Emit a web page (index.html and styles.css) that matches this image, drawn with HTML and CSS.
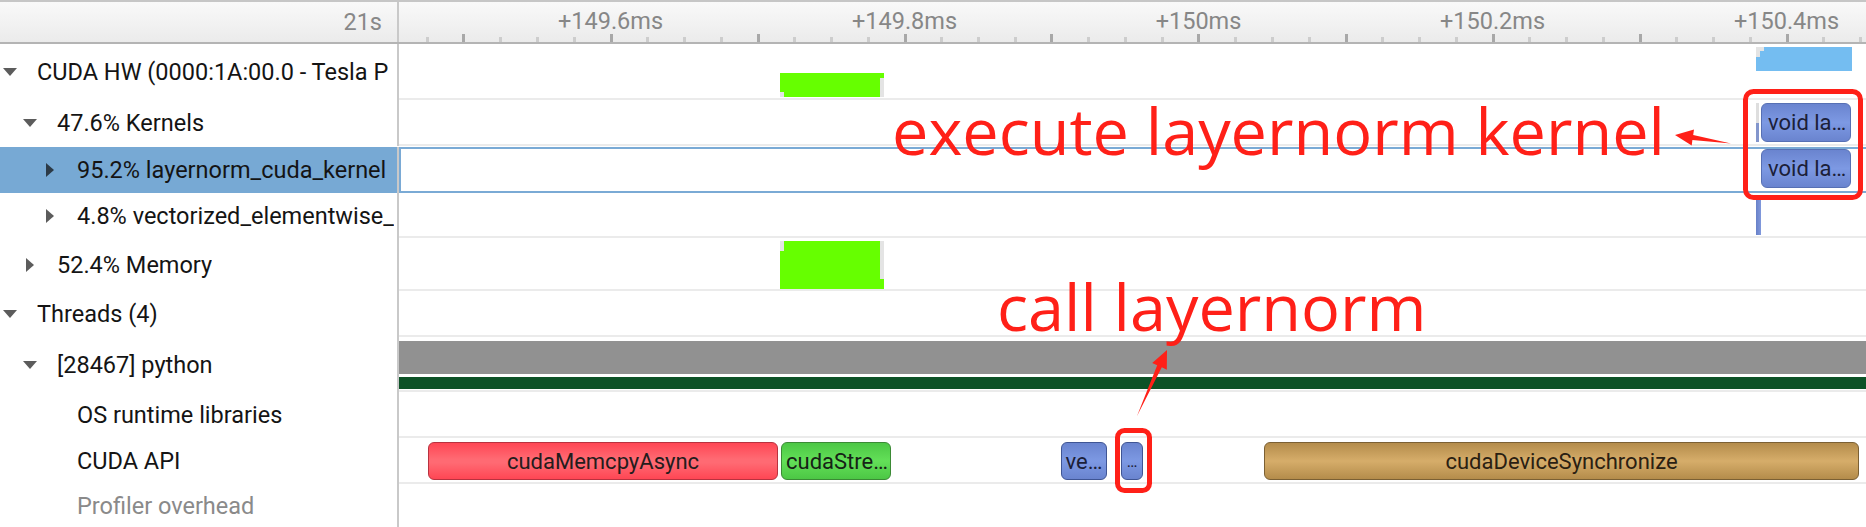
FILE: index.html
```html
<!DOCTYPE html>
<html>
<head>
<meta charset="utf-8">
<link rel="stylesheet" href="styles.css">
</head>
<body>
<div class="view">
  <div class="row hdr">
    <div class="label">21s</div>
    <div class="track ruler">
      <span class="tick-label" style="left:211.5px">+149.6ms</span>
      <span class="tick-label" style="left:505.5px">+149.8ms</span>
      <span class="tick-label" style="left:799.5px">+150ms</span>
      <span class="tick-label" style="left:1093.5px">+150.2ms</span>
      <span class="tick-label" style="left:1387.5px">+150.4ms</span>
    </div>
  </div>

  <div class="row h56">
    <div class="label lv0"><span class="slot"><span class="down"></span></span><span class="txt">CUDA HW (0000:1A:00.0 - Tesla P</span></div>
    <div class="track">
      <div class="blk lime" style="left:381px;top:29px;width:104px;height:24px"></div>
      <div class="blk notch" style="left:381px;top:48px;width:4px;height:5px"></div>
      <div class="blk notch" style="left:481px;top:34px;width:4px;height:19px"></div>
      <div class="blk sky" style="left:1357px;top:3px;width:96px;height:24px"></div>
      <div class="blk notch" style="left:1357px;top:3px;width:8px;height:4px"></div>
      <div class="blk notch" style="left:1357px;top:7px;width:4px;height:6px"></div>
    </div>
  </div>

  <div class="row h46">
    <div class="label lv1"><span class="slot"><span class="down"></span></span><span class="txt">47.6% Kernels</span></div>
    <div class="track">
      <div class="blk thin-split" style="left:1357px;top:3px;width:3px;height:39px"></div>
      <div class="ev blue left" style="left:1362px;top:3px;width:90px;height:39px">void la…</div>
    </div>
  </div>

  <div class="row h46 selected">
    <div class="label lv2"><span class="slot"><span class="right"></span></span><span class="txt">95.2% layernorm_cuda_kernel</span></div>
    <div class="track">
      <div class="ev blue left" style="left:1360px;top:0px;width:90px;height:39px">void la…</div>
    </div>
  </div>

  <div class="row h45">
    <div class="label lv2"><span class="slot"><span class="right"></span></span><span class="txt">4.8% vectorized_elementwise_</span></div>
    <div class="track">
      <div class="blk thin-blue" style="left:1357px;top:7px;width:5px;height:35px"></div>
    </div>
  </div>

  <div class="row h53">
    <div class="label lv1"><span class="slot"><span class="right"></span></span><span class="txt">52.4% Memory</span></div>
    <div class="track">
      <div class="blk lime" style="left:381px;top:3px;width:104px;height:48px"></div>
      <div class="blk notch" style="left:381px;top:3px;width:4px;height:10px"></div>
      <div class="blk notch" style="left:481px;top:3px;width:4px;height:38px"></div>
    </div>
  </div>

  <div class="row h46">
    <div class="label lv0"><span class="slot"><span class="down"></span></span><span class="txt">Threads (4)</span></div>
    <div class="track"></div>
  </div>

  <div class="row h55">
    <div class="label lv1"><span class="slot"><span class="down"></span></span><span class="txt">[28467] python</span></div>
    <div class="track">
      <div class="thread-gray"></div>
      <div class="thread-green"></div>
    </div>
  </div>

  <div class="row h46">
    <div class="label lv2"><span class="slot"></span><span class="txt">OS runtime libraries</span></div>
    <div class="track"></div>
  </div>

  <div class="row h46">
    <div class="label lv2"><span class="slot"></span><span class="txt">CUDA API</span></div>
    <div class="track">
      <div class="ev red" style="left:29px;top:4px;width:350px;height:38px">cudaMemcpyAsync</div>
      <div class="ev green left" style="left:382px;top:4px;width:110px;height:38px">cudaStre…</div>
      <div class="ev blue dark" style="left:662px;top:4px;width:46px;height:38px">ve…</div>
      <div class="ev blue dark small" style="left:722px;top:4px;width:22px;height:38px">…</div>
      <div class="ev tan" style="left:865px;top:4px;width:595px;height:38px">cudaDeviceSynchronize</div>
    </div>
  </div>

  <div class="row last">
    <div class="label lv2"><span class="slot"></span><span class="txt muted">Profiler overhead</span></div>
    <div class="track"></div>
  </div>
</div>

<div class="anno anno-exec">execute layernorm kernel</div>
<div class="anno anno-call">call layernorm</div>
<svg class="anno-shapes" width="1866" height="527" viewBox="0 0 1866 527">
  <rect x="1745.5" y="91.5" width="115" height="106" rx="8" ry="8" fill="none" stroke="#ff2018" stroke-width="5"/>
  <rect x="1117.5" y="430.5" width="32" height="60" rx="7" ry="7" fill="none" stroke="#ff2018" stroke-width="5"/>
  <polygon fill="#ff2018" points="1675,135 1694,129.6 1693.2,135 1731,143.5 1692.4,140 1691.7,145.4"/>
  <polygon fill="#ff2018" points="1167,350 1166.8,369.7 1161.8,367.3 1137,416 1157.2,365.3 1152.2,362.9"/>
</svg>
</body>
</html>
```

FILE: styles.css
```css
* { box-sizing: border-box; }

html, body {
  margin: 0;
  padding: 0;
}

body {
  width: 1866px;
  height: 527px;
  overflow: hidden;
  position: relative;
  background: #ffffff;
  font-family: Roboto, "Liberation Sans", sans-serif;
}

.view {
  display: flex;
  flex-direction: column;
  width: 1866px;
}

.row {
  display: flex;
  flex: none;
}

.h56 { height: 56px; }
.h46 { height: 46px; }
.h45 { height: 45px; }
.h53 { height: 53px; }
.h55 { height: 55px; }
.last { height: 43px; }

.label {
  width: 399px;
  flex: none;
  border-right: 2px solid #c9c9c9;
  display: flex;
  align-items: center;
  overflow: hidden;
  white-space: nowrap;
  font-size: 23.5px;
  color: #141414;
}

.lv0 { padding-left: 0; }
.lv1 { padding-left: 20px; }
.lv2 { padding-left: 40px; }

.slot {
  width: 37px;
  flex: none;
  display: flex;
  align-items: center;
}

.down {
  width: 0;
  height: 0;
  margin-left: 3px;
  border-left: 7px solid transparent;
  border-right: 7px solid transparent;
  border-top: 8px solid #5c5c5c;
}

.right {
  width: 0;
  height: 0;
  margin-left: 6px;
  border-top: 7px solid transparent;
  border-bottom: 7px solid transparent;
  border-left: 8px solid #5c5c5c;
}

.txt { overflow: hidden; }
.muted { color: #8a8a8a; }

.track {
  flex: 1;
  position: relative;
  border-bottom: 2px solid #ebebeb;
}

.last .track { border-bottom: 0; }

/* header / ruler */
.hdr {
  height: 44px;
  border-top: 2px solid #c6c6c6;
  border-bottom: 2px solid #b4b4b4;
  background: linear-gradient(#f9f9f9, #ebebeb);
}

.hdr .label {
  justify-content: flex-end;
  padding-right: 15px;
  color: #888888;
}

.ruler {
  border-bottom: 0;
  background-image:
    repeating-linear-gradient(to right, transparent 0 63.5px, #a8a8a8 63.5px 66.5px, transparent 66.5px 147px),
    repeating-linear-gradient(to right, transparent 0 26.75px, #cdcdcd 26.75px 29.75px, transparent 29.75px 36.75px);
  background-size: 100% 8px, 100% 5px;
  background-position: 0 100%, 0 100%;
  background-repeat: no-repeat;
}

.tick-label {
  position: absolute;
  top: 5px;
  transform: translateX(-50%);
  font-size: 23.5px;
  color: #878787;
  line-height: 28px;
  white-space: nowrap;
}

/* selected row */
.selected { margin-top: 1px; }
.selected .label { background: #77a9d4; }
.selected .right { border-left-color: #2c3a47; }
.selected .track {
  border: 2px solid #7aaad5;
  border-right: 0;
}

/* timeline blocks */
.blk { position: absolute; }
.lime { background: #66ff00; }
.sky { background: #74bdf1; }
.notch { background: #e4e4e4; }
.thin-split { background: linear-gradient(#dedede 0 50%, #8396cc 50% 100%); }
.thin-blue { background: linear-gradient(to right, #6780c8, #8199dc); }

.thread-gray {
  position: absolute;
  left: 0;
  right: 0;
  top: 4px;
  height: 33px;
  background: #919191;
}

.thread-green {
  position: absolute;
  left: 0;
  right: 0;
  top: 40px;
  height: 12px;
  background: #0d5227;
}

.ev {
  position: absolute;
  display: flex;
  align-items: center;
  justify-content: center;
  border: 1.5px solid;
  border-radius: 6px;
  font-size: 22px;
  color: #241c1c;
  white-space: nowrap;
  overflow: hidden;
}

.ev.left {
  justify-content: flex-start;
  padding-left: 4px;
}

.ev.red {
  background: linear-gradient(#ff4654, #ff6a73 45%, #ff6a73 55%, #ff4654);
  border-color: #b8323f;
}

.ev.green {
  background: linear-gradient(#4cc745, #63e058 50%, #4cc745);
  border-color: #3b8a35;
  color: #162216;
}

.ev.blue {
  background: linear-gradient(#6a84cf, #7d99e3 50%, #6a84cf);
  border-color: #5770b4;
  color: #1b2038;
}

.ev.blue.left { padding-left: 6px; }

.ev.blue.dark { border-color: #3f5594; }

.ev.small { font-size: 16px; }

.ev.tan {
  background: linear-gradient(#b48c4b, #d6ad6a 50%, #b48c4b);
  border-color: #7b6034;
  color: #2a2012;
}

/* annotations */
.anno {
  position: absolute;
  font-family: "Open Sans", "Noto Sans", sans-serif;
  font-size: 64.8px;
  line-height: 1;
  color: #ff2018;
  white-space: nowrap;
}

.anno-exec { left: 892px; top: 98px; }
.anno-call { left: 997px; top: 274px; }

.anno-shapes {
  position: absolute;
  left: 0;
  top: 0;
  pointer-events: none;
}
```
